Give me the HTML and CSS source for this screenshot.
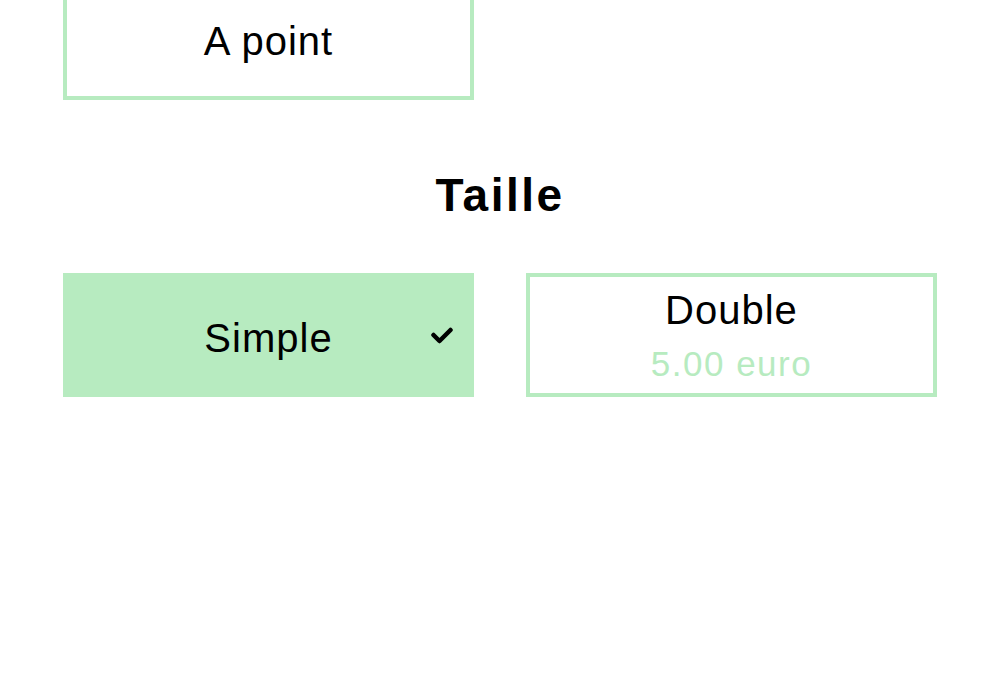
FILE: index.html
```html
<!DOCTYPE html>
<html lang="fr">
<head>
    <meta charset="UTF-8">
    <meta name="viewport" content="width=device-width, initial-scale=1.0">
    <title>Options</title>
    <link rel="stylesheet" href="styles.css">
</head>
<body>

<div class="page">
    <!-- cuisson (haut de la liste, déjà défilé) -->
    <div class="options">
        <div class="option plain">
            <span class="option-label">A point</span>
        </div>
    </div>

    <h2 class="group-title">Taille</h2>

    <!-- taille -->
    <div class="options">
        <div class="option plain selected">
            <span class="option-label">Simple</span>
            <svg class="check" width="22" height="17" viewBox="0 0 22 17">
                <path d="M2.5 8 L8.5 14 L19.5 3" fill="none" stroke="#000" stroke-width="4.5" stroke-linecap="round" stroke-linejoin="round"/>
            </svg>
        </div>
        <div class="option">
            <span class="option-label">Double</span>
            <span class="option-price">5.00 euro</span>
        </div>
    </div>
</div>

</body>
</html>
```

FILE: styles.css
```css
body {
    margin: 0;
    font-family: "Liberation Sans", Arial, sans-serif;
    background-color: #ffffff;
    color: #000;
}
.page {
    padding: 0 63px;
    margin-top: -24px;
}
.options {
    display: grid;
    grid-template-columns: 1fr 1fr;
    column-gap: 52px;
    row-gap: 24px;
}
.option {
    position: relative;
    box-sizing: border-box;
    height: 124px;
    border: 4px solid #b7ebc0;
    display: flex;
    flex-direction: column;
    align-items: center;
    justify-content: center;
}
.option.plain {
    padding-top: 6px;
}
.option.selected {
    background-color: #b7ebc0;
}
.option-label {
    font-size: 40px;
    line-height: 46px;
    letter-spacing: 1px;
}
.option-price {
    font-size: 35px;
    line-height: 40px;
    letter-spacing: 1.5px;
    margin-top: 11px;
    color: #b7ebc0;
}
.check {
    position: absolute;
    right: 17px;
    top: 50%;
    margin-top: -8px;
}
.group-title {
    margin: 69px 0 52px;
    text-align: center;
    font-size: 46px;
    line-height: 52px;
    letter-spacing: 2.5px;
    font-weight: bold;
}
```
